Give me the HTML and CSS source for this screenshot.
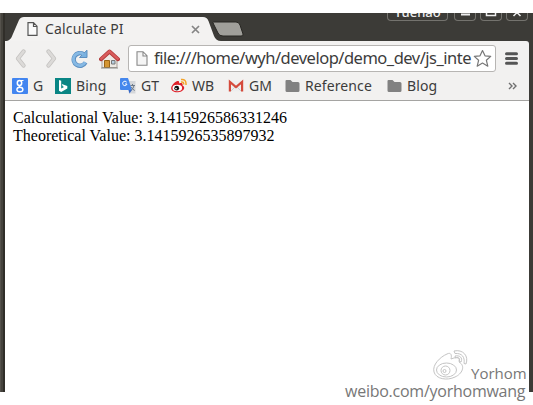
FILE: index.html
```
<!DOCTYPE html>
<html lang="en">
<head>
<meta charset="utf-8">
<title>Calculate PI</title>
<link rel="stylesheet" href="styles.css">
</head>
<body>
<div class="window">
  <header class="titlebar">
    <svg class="tab-shapes" width="250" height="28" viewBox="0 0 250 28">
      <path d="M0 28C4 28 6 26 7.500 22L14 7Q15.500 4 19 4H198Q202 4 203.500 8L209 23Q211 28 216 28Z" fill="#f3f2f1"/>
      <path d="M208.500 9H231Q234 9 235 12L238 21Q238.500 23 236 23H218Q214 23 213 20L208.500 11Q207.500 9 208.500 9Z" fill="#a09f9a" stroke="#272622"/>
    </svg>
    <div class="tab">
      <svg width="11" height="14" viewBox="0 0 11 14"><path d="M1 .7H6.500L10 4.200V13.300H1ZM6.500 .7V4.500H10" fill="#fafafa" stroke="#555" stroke-width="1.200"/></svg>
      <span class="tab-title">Calculate PI</span>
      <svg class="tab-close" width="9" height="9" viewBox="0 0 9 9"><path d="M1 1L8 8M8 1L1 8" stroke="#858585" stroke-width="1.700"/></svg>
    </div>
    <div class="controls">
      <div class="control user"><span>Yuehao</span></div>
      <div class="control"><svg width="20" height="7"><path d="M6 1.500H15" stroke="#eee" stroke-width="2"/></svg></div>
      <div class="control"><svg width="20" height="7"><path d="M5.500 0V2.500H14.500V0" fill="none" stroke="#eee" stroke-width="1.500"/></svg></div>
      <div class="control"><svg width="20" height="7"><path d="M6.500 3L10 -.5L13.500 3" fill="none" stroke="#eee" stroke-width="1.500"/></svg></div>
    </div>
  </header>
  <div class="chrome">
    <nav class="toolbar">
      <svg class="back" width="11" height="19" viewBox="0 0 11 19"><path d="M8.500 2.500L3 9.500L8.500 16.500" fill="none" stroke="#c3c1bf" stroke-width="4.200" stroke-linejoin="round" stroke-linecap="round"/><path d="M8.500 2.500L3 9.500L8.500 16.500" fill="none" stroke="#dcdad8" stroke-width="2.800" stroke-linejoin="round" stroke-linecap="round"/></svg>
      <svg class="forward" width="11" height="19" viewBox="0 0 11 19"><path d="M2.500 2.500L8 9.500L2.500 16.500" fill="none" stroke="#c3c1bf" stroke-width="4.200" stroke-linejoin="round" stroke-linecap="round"/><path d="M2.500 2.500L8 9.500L2.500 16.500" fill="none" stroke="#dcdad8" stroke-width="2.800" stroke-linejoin="round" stroke-linecap="round"/></svg>
      <svg class="reload" width="18" height="19" viewBox="0 0 18 19"><path d="M13.500 5.200A6.300 6.300 0 1 0 15.500 13.500" fill="none" stroke="#5d8fc0" stroke-width="4.400"/><path d="M17 1.200V8.500H9.500Z" fill="#79b1e0" stroke="#5d8fc0"/><path d="M13.500 5.200A6.300 6.300 0 1 0 15.300 13.200" fill="none" stroke="#86b9e4" stroke-width="2.800"/></svg>
      <svg class="home" width="21" height="21" viewBox="0 0 21 21"><path d="M3 10L10.500 4L18 10V19.500H3Z" fill="#eeeae5" stroke="#a99d95"/><path d="M5.500 12.500H10.500V19.500H5.500Z" fill="#d49532" stroke="#9a6315"/><path d="M12.500 12.500H16V16H12.500Z" fill="#b8cfe0" stroke="#777"/><path d="M2 11.200L10.500 3.500L19 11.200" fill="none" stroke="#b03a3a" stroke-width="4" stroke-linejoin="round" stroke-linecap="round"/><path d="M2.200 10.800L10.500 3.400L18.800 10.800" fill="none" stroke="#d95c5c" stroke-width="2.400" stroke-linecap="round"/><path d="M2 20H19" stroke="#888a85"/></svg>
      <div class="omnibox">
        <svg width="12" height="15" viewBox="0 0 12 15"><path d="M1 .7H7L11 4.700V14.300H1ZM7 .7V5H11" fill="#f5f5f5" stroke="#888" stroke-width="1.100"/></svg>
        <span class="url">file:///home/wyh/develop/demo_dev/js_inte</span>
        <svg class="star" width="19" height="19" viewBox="0 0 19 19"><path d="M9.500 1.500L12 6.800L17.700 7.400L13.400 11.300L14.800 17.200L9.500 14.100L4.200 17.200L5.600 11.300L1.300 7.400L7 6.800Z" fill="#fff" stroke="#777" stroke-width="1.200" stroke-linejoin="round"/></svg>
      </div>
      <svg class="menu" width="13" height="13" viewBox="0 0 13 13"><path d="M1.500 1.700H11.500M1.500 6.500H11.500M1.500 11.300H11.500" stroke="#555" stroke-width="3" stroke-linecap="round"/></svg>
    </nav>
    <nav class="bookmarks">
      <div class="bookmark"><svg width="16" height="16" viewBox="0 0 16 16"><rect width="16" height="16" rx="1" fill="#4285f0"/><ellipse cx="7.500" cy="5" rx="2.200" ry="2.500" fill="none" stroke="#fff" stroke-width="1.500"/><path d="M8 2.500H11.500M9 7.300Q6 8.500 8 9.300" fill="none" stroke="#fff" stroke-width="1.200"/><ellipse cx="7.900" cy="11.500" rx="3" ry="2.200" fill="none" stroke="#fff" stroke-width="1.400"/></svg><span class="w-g">G</span></div>
      <div class="bookmark"><svg width="16" height="16" viewBox="0 0 16 16"><path fill="#098584" d="M0 0H16V16H0Z"/><path d="M4 2L6.200 2.800V10.500L9 9L7.700 8.300L6.800 6L12.300 8V10.600L6.200 14L4 12.700Z" fill="#fff"/></svg><span class="w-bing">Bing</span></div>
      <div class="bookmark"><svg width="16" height="16" viewBox="0 0 16 16"><path d="M6 3H15.500V15.500H9Z" fill="#d5d7da"/><path d="M1 0H8L12 12H1Q0 12 0 11V1Q0 0 1 0Z" fill="#4587ed"/><path d="M8.500 12H12L9.500 15.500Z" fill="#3367c8"/><path d="M6.700 4.200A2.200 2.200 0 1 0 7 6H5" fill="none" stroke="#fff"/><path d="M10.500 7.500H15M12.500 6V7.500M14 7.500Q13.500 11 10.800 12.500M11.300 9Q12.500 11.500 14.700 12.500" fill="none" stroke="#6e7b89"/></svg><span class="w-gt">GT</span></div>
      <div class="bookmark"><svg width="16" height="16" viewBox="0 0 16 16"><path d="M6.500 3C8 2.500 8.500 4 8 5.500C11 4.500 12 5.500 11.500 7.500C15 9 13 14 7 14.200C1 14.400-1 11 .8 8C2.500 5 5 3.200 6.500 3Z" fill="#df2029"/><ellipse cx="6.300" cy="10" rx="4.800" ry="3.200" fill="#fff"/><circle cx="5.700" cy="10.200" r="2.400" fill="#111"/><circle cx="5" cy="10.600" r=".8" fill="#fff"/><path d="M10 1.500Q15.500 .8 15 7M10 4Q13 3.500 12.700 6.500" fill="none" stroke="#f4a329" stroke-width="1.500"/></svg><span class="w-wb">WB</span></div>
      <div class="bookmark"><svg width="16" height="16" viewBox="0 0 16 16"><path d="M1 3H15V13.500H1Z" fill="#eee"/><path d="M3 13L8 8L13 13" fill="none" stroke="#ccc"/><path d="M1.900 13.500V3.800L8 9L14.100 3.800V13.500" fill="none" stroke="#d54b3d" stroke-width="2.200"/></svg><span class="w-gm">GM</span></div>
      <div class="bookmark"><svg width="15" height="16" viewBox="0 0 15 16"><path d="M1.500 2H5.500L7.500 4H13Q14.500 4 14.500 5.500V12.500Q14.500 14 13 14H2Q.5 14 .5 12.500V3Q.5 2 1.500 2Z" fill="#818181"/></svg><span class="w-ref">Reference</span></div>
      <div class="bookmark"><svg width="15" height="16" viewBox="0 0 15 16"><path d="M1.500 2H5.500L7.500 4H13Q14.500 4 14.500 5.500V12.500Q14.500 14 13 14H2Q.5 14 .5 12.500V3Q.5 2 1.500 2Z" fill="#818181"/></svg><span class="w-blog">Blog</span></div>
      <svg class="more" width="9" height="8" viewBox="0 0 9 8"><path d="M1 1L4 4L1 7M5 1L8 4L5 7" fill="none" stroke="#707070" stroke-width="1.400"/></svg>
    </nav>
  </div>
  <main class="page">Calculational Value: 3.1415926586331246<br>Theoretical Value: 3.1415926535897932</main>
</div>
<div class="watermark">
  <div class="mark-top"><svg width="37" height="32" viewBox="0 0 37 32"><g fill="none" stroke="#c4c4c4"><path d="M15 5C19 3 20 6 19 10C26 7 29 9 27 13C34 17 30 25 23 28C15 32 4 30 2 23C0 16 8 8 15 5Z"/><ellipse cx="14.500" cy="21" rx="10" ry="7"/><circle cx="13.500" cy="21.500" r="4.500"/><circle cx="12.500" cy="22" r="1.500"/><path d="M22 2C31 0 37 7 34 15L32 14.500C33 8 30 4 23 4.500ZM23 7C28 6 31 9 29 13L27 12C28 9 26 8 23.500 9Z"/></g></svg><span class="mark-name">Yorhom</span></div>
  <div class="mark-url">weibo.com/yorhomwang</div>
</div>
</body>
</html>
```

FILE: styles.css
```
* { box-sizing: border-box; }
body {
  margin: 0;
  height: 405px;
  overflow: hidden;
  background: #fff;
  font-family: "Noto Sans", "Open Sans", sans-serif;
  color: #3c3c3c;
}
svg { display: block; flex: none; }
.window {
  height: 379px;
  margin-top: 13px;
  padding: 0 4px 0 5px;
  background: linear-gradient(90deg, #55524c 0 1px, #45433d 1px 3px, #302e29 3px 5px, #3c3b37 5px);
}
.titlebar {
  position: relative;
  height: 28px;
  display: flex;
  justify-content: space-between;
  background: #3c3b37;
}
.tab-shapes { position: absolute; left: 0; top: 0; }
.tab {
  position: relative;
  display: flex;
  align-items: center;
  width: 195px;
  height: 24px;
  margin-top: 4px;
  padding-left: 22px;
}
.tab-title { margin-left: 7px; font-size: 14px; line-height: 20px; letter-spacing: 0.15px; white-space: nowrap; }
.tab-close { margin-left: auto; }
.controls { display: flex; gap: 4px; height: 8px; margin-right: 1px; }
.control {
  width: 22px;
  height: 8px;
  border: 1px solid #74736e;
  border-top: 0;
  border-radius: 0 0 4px 4px;
  overflow: hidden;
}
.user { width: 61px; margin-right: 2px; text-align: center; color: #eee; font-size: 13px; }
.user span { display: block; line-height: 18px; margin-top: -10px; font-weight: 500; }
.chrome {
  height: 60px;
  background: #f2f1f0;
  border-bottom: 1px solid #a5a4a2;
  border-radius: 0 3px 0 0;
}
.toolbar { height: 34px; padding: 4px 10px 4px 10px; display: flex; align-items: center; }
.forward { margin-left: 20px; }
.reload { margin-left: 13px; }
.home { margin-left: 11px; }
.omnibox {
  width: 368px;
  height: 27px;
  margin-left: 8px;
  padding: 0 3px 0 7px;
  display: flex;
  align-items: center;
  background: #fff;
  border: 1px solid #b7b5b3;
  border-radius: 3px;
}
.url { width: 319px; margin-left: 6px; font-size: 16.5px; line-height: 24px; letter-spacing: -0.5px; white-space: nowrap; }
.menu { margin-left: 9px; }
.bookmarks { display: flex; gap: 12px; height: 22px; padding: 0 12px 0 7px; align-items: center; }
.bookmark { display: flex; align-items: center; gap: 5px; font-size: 14px; line-height: 18px; letter-spacing: 0.1px; white-space: nowrap; }
.w-g { width: 10px; }
.w-bing { width: 32px; }
.w-gt { width: 18px; }
.w-wb { width: 24px; }
.w-gm { width: 24px; }
.w-ref { width: 70px; }
.w-blog { width: 33px; }
.more { margin-left: auto; }
.page {
  height: 291px;
  padding: 8px;
  background: #fff;
  color: #000;
  font: 16px/18px "Liberation Serif", serif;
}
.watermark {
  position: absolute;
  left: 345px;
  top: 349px;
  width: 182px;
  color: #777;
  font-family: "Open Sans", sans-serif;
}
.mark-top { display: flex; justify-content: flex-end; height: 32px; }
.mark-name { margin: 15px 0 0 2px; width: 56px; font-size: 15px; line-height: 18px; }
.mark-url { font-size: 16px; line-height: 20px; letter-spacing: -0.25px; white-space: nowrap; }
```
